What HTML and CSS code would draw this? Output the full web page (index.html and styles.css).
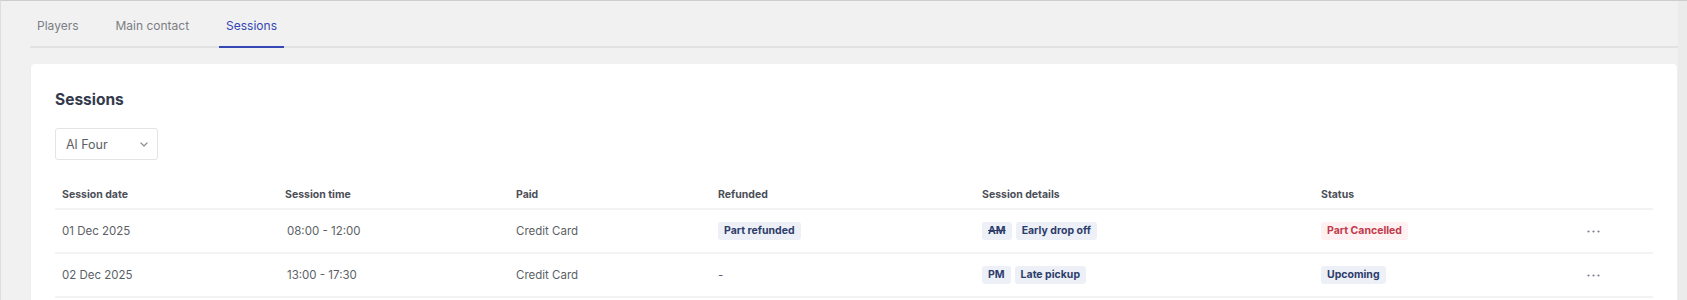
FILE: index.html
```html
<!DOCTYPE html>
<html lang="en">

<head>
  <meta charset="UTF-8" />
  <meta name="viewport" content="width=device-width, initial-scale=1" />
  <title>Sessions</title>
  <link rel="stylesheet" href="styles.css">
</head>

<body>
  <div class="page">
    <main class="content">
      <nav class="tabs" aria-label="Sections">
        <a class="tab" href="#">Players</a>
        <a class="tab" href="#">Main contact</a>
        <a class="tab tab-active" href="#">Sessions</a>
      </nav>

      <section class="card">
        <h2 class="card-title">Sessions</h2>

        <div class="select">
          <span>Al Four</span>
          <svg class="chevron" width="8" height="5" viewBox="0 0 8 5" aria-hidden="true">
            <path d="M1 1l3 3 3-3" fill="none" stroke="#8a8f99" stroke-width="1.2" stroke-linecap="round" stroke-linejoin="round" />
          </svg>
        </div>

        <table class="sessions">
          <colgroup>
            <col class="col-date" />
            <col class="col-time" />
            <col class="col-paid" />
            <col class="col-refund" />
            <col class="col-details" />
            <col class="col-status" />
            <col class="col-actions" />
          </colgroup>
          <thead>
            <tr>
              <th>Session date</th>
              <th>Session time</th>
              <th>Paid</th>
              <th>Refunded</th>
              <th>Session details</th>
              <th>Status</th>
              <th></th>
            </tr>
          </thead>
          <tbody>
            <tr>
              <td>01 Dec 2025</td>
              <td class="time">08:00 - 12:00</td>
              <td>Credit Card</td>
              <td><span class="badge">Part refunded</span></td>
              <td>
                <div class="badges">
                  <span class="badge badge-struck">AM</span>
                  <span class="badge">Early drop off</span>
                </div>
              </td>
              <td><span class="badge badge-danger">Part Cancelled</span></td>
              <td class="actions">
                <svg class="dots" width="13" height="3" viewBox="0 0 13 3" aria-label="More">
                  <circle cx="1.5" cy="1.5" r="1.1" fill="#7d828c" />
                  <circle cx="6.5" cy="1.5" r="1.1" fill="#7d828c" />
                  <circle cx="11.5" cy="1.5" r="1.1" fill="#7d828c" />
                </svg>
              </td>
            </tr>
            <tr>
              <td>02 Dec 2025</td>
              <td class="time">13:00 - 17:30</td>
              <td>Credit Card</td>
              <td>-</td>
              <td>
                <div class="badges">
                  <span class="badge">PM</span>
                  <span class="badge">Late pickup</span>
                </div>
              </td>
              <td><span class="badge">Upcoming</span></td>
              <td class="actions">
                <svg class="dots" width="13" height="3" viewBox="0 0 13 3" aria-label="More">
                  <circle cx="1.5" cy="1.5" r="1.1" fill="#7d828c" />
                  <circle cx="6.5" cy="1.5" r="1.1" fill="#7d828c" />
                  <circle cx="11.5" cy="1.5" r="1.1" fill="#7d828c" />
                </svg>
              </td>
            </tr>
          </tbody>
        </table>
      </section>
    </main>
    <div class="scroll-track"></div>
  </div>
</body>

</html>
```

FILE: styles.css
```css
:root {
  --color-bg: #f1f1f1;
  --color-line: #e2e2e2;
  --color-blue: #3347b5;
  --color-heading: #333a4c;
  --color-text: #5c5f66;
  --color-muted: #7b7e84;
  --color-badge: #edf0f7;
  --color-badge-text: #2d3d6b;
  --color-danger: #c23a4b;
  --color-danger-bg: #fff0f1;
  --font-family: 'Inter', 'Liberation Sans', sans-serif;
}

*,
*::before,
*::after {
  box-sizing: border-box;
}

body {
  margin: 0;
  font-family: var(--font-family);
  background: var(--color-bg);
  color: var(--color-text);
  -webkit-font-smoothing: antialiased;
}

.page {
  display: flex;
  min-height: 300px;
  border-top: 1px solid #cdcdcd;
  border-left: 1px solid #dedede;
}

.content {
  flex: 1;
  padding: 0 0 0 29px;
}

.scroll-track {
  width: 9px;
  background: #ebebeb;
}

/* Tabs */
.tabs {
  display: flex;
  gap: 23px;
  padding-top: 15px;
  border-bottom: 2px solid var(--color-line);
}

.tab {
  padding: 0 7px 10px;
  margin-bottom: -2px;
  border-bottom: 2px solid transparent;
  font-size: 12px;
  line-height: 20px;
  color: var(--color-muted);
  text-decoration: none;
}

.tab-active {
  color: var(--color-blue);
  border-bottom-color: var(--color-blue);
}

/* Card */
.card {
  margin: 16px 1px 0 1px;
  background: #ffffff;
  border-radius: 4px;
  box-shadow: 0 1px 3px rgba(0, 0, 0, 0.04);
  padding: 24px 24px 0;
  min-height: 240px;
}

.card-title {
  margin: 0;
  font-size: 15.5px;
  line-height: 24px;
  font-weight: 700;
  color: var(--color-heading);
}

.select {
  margin-top: 16px;
  width: 103px;
  height: 32px;
  display: flex;
  align-items: center;
  justify-content: space-between;
  padding: 0 7px 0 10px;
  border: 1px solid #e4e4e6;
  border-radius: 3px;
  font-size: 12.5px;
  color: var(--color-text);
}

.chevron {
  margin-right: 2px;
}

/* Table */
.sessions {
  margin-top: 18px;
  width: 100%;
  border-collapse: collapse;
  table-layout: fixed;
}

.col-date { width: 223px; }
.col-time { width: 231px; }
.col-paid { width: 202px; }
.col-refund { width: 264px; }
.col-details { width: 339px; }
.col-status { width: 219px; }

.sessions th {
  padding: 9px 7px 5px;
  text-align: left;
  font-size: 10.5px;
  line-height: 16px;
  font-weight: 700;
  color: #4b4e57;
  border-bottom: 2px solid #f2f3f5;
}

.sessions td {
  height: 44px;
  padding: 0 7px;
  font-size: 11.5px;
  color: var(--color-text);
  border-bottom: 2px solid #f2f3f5;
  vertical-align: middle;
}

.sessions td.time {
  padding-left: 9px;
}

.sessions td.actions {
  text-align: center;
}

.dots {
  display: block;
  margin: 0 auto;
}

.badges {
  display: flex;
  gap: 4px;
}

.badge {
  display: inline-block;
  height: 18px;
  padding: 0 6px;
  border-radius: 3px;
  background: var(--color-badge);
  color: var(--color-badge-text);
  font-size: 10.5px;
  line-height: 18px;
  font-weight: 700;
}

.badge-struck {
  text-decoration: line-through;
}

.badge-danger {
  background: var(--color-danger-bg);
  color: var(--color-danger);
}
```
